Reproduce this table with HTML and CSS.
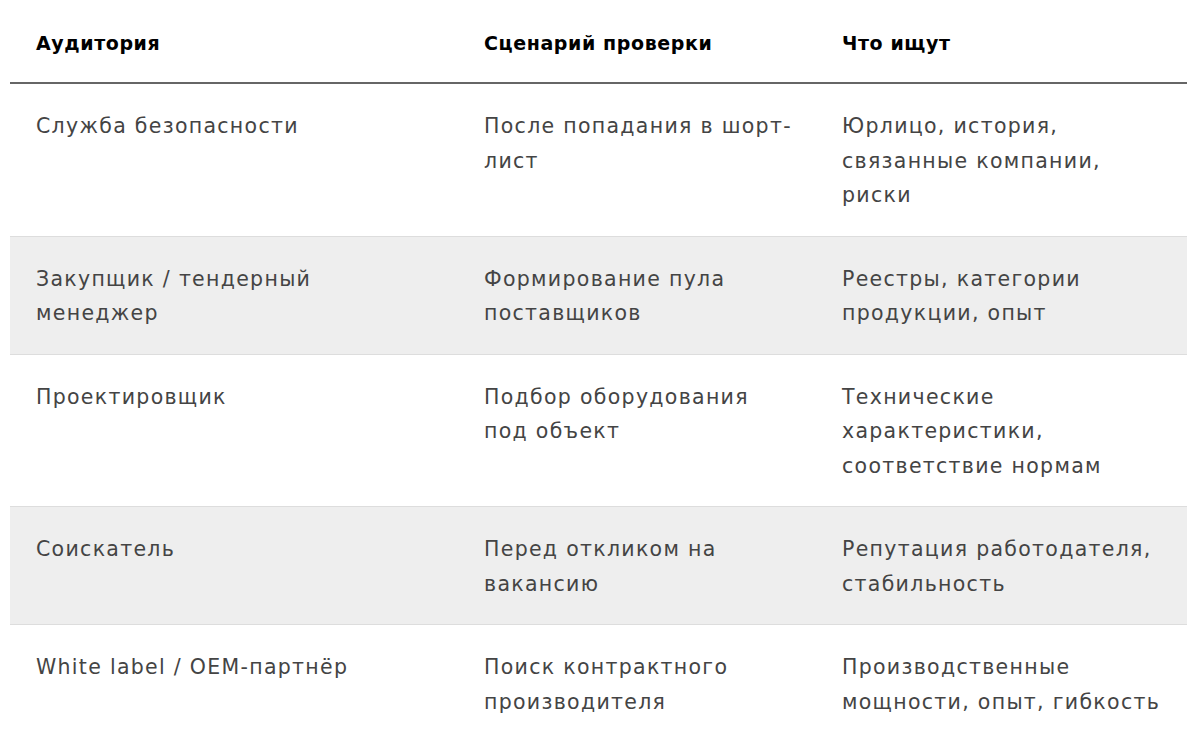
FILE: index.html
```html
<!DOCTYPE html>
<html lang="ru">
<head>
<meta charset="utf-8">
<link rel="stylesheet" href="styles.css">
</head>
<body>
<table class="tbl">
  <colgroup>
    <col class="c1"><col class="c2"><col class="c3">
  </colgroup>
  <thead>
    <tr><th>Аудитория</th><th>Сценарий проверки</th><th>Что ищут</th></tr>
  </thead>
  <tbody>
    <tr><td>Служба безопасности</td><td>После попадания в шорт-лист</td><td>Юрлицо, история, связанные компании, риски</td></tr>
    <tr><td>Закупщик / тендерный менеджер</td><td>Формирование пула поставщиков</td><td>Реестры, категории продукции, опыт</td></tr>
    <tr><td>Проектировщик</td><td>Подбор оборудования под объект</td><td>Технические характеристики, соответствие нормам</td></tr>
    <tr><td>Соискатель</td><td>Перед откликом на вакансию</td><td>Репутация работодателя, стабильность</td></tr>
    <tr><td>White label / OEM-партнёр</td><td>Поиск контрактного производителя</td><td>Производственные мощности, опыт, гибкость</td></tr>
  </tbody>
</table>
</body>
</html>
```
FILE: styles.css
```css
html, body {
  margin: 0;
  padding: 0;
  background: #fff;
}
body {
  font-family: "DejaVu Sans", "Noto Sans", sans-serif;
  overflow: hidden;
}
.tbl {
  margin-left: 10px;
  width: 1177px;
  border-collapse: collapse;
  table-layout: fixed;
}
.c1 { width: 448px; }
.c2 { width: 358px; }
.c3 { width: 371px; }
.tbl th {
  text-align: left;
  font-weight: 700;
  font-size: 19px;
  letter-spacing: 0.6px;
  line-height: 34px;
  color: #000;
  padding: 26px 26px 22px;
  border-bottom: 2px solid #666;
}
.tbl td {
  vertical-align: top;
  font-size: 20.5px;
  line-height: 34.5px;
  color: #444;
  letter-spacing: 1.3px;
  padding: 25px 26px 23px;
  border-bottom: 1px solid #ddd;
}
.tbl td:nth-child(2) {
  padding-right: 20px;
}
.tbl tbody tr:nth-child(even) td {
  background: #eee;
}
```
